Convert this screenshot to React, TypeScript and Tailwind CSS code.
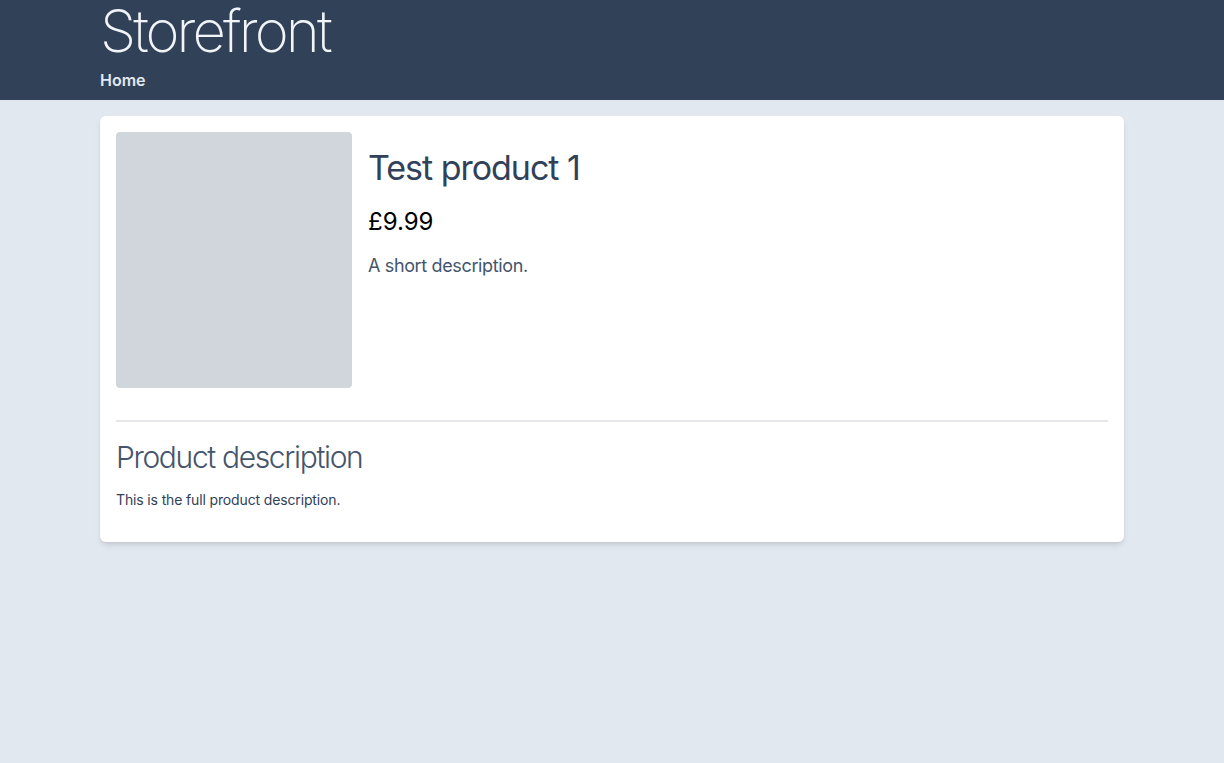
export default function App() {
  return (
    <div className="min-h-screen bg-slate-200 font-['Inter',sans-serif]">
      <header className="bg-slate-700 h-[100px]">
        <div className="max-w-5xl mx-auto">
          <h1 className="text-[58px] leading-[62px] font-extralight text-slate-100 tracking-[-0.05em]">Storefront</h1>
          <nav className="mt-[6px]">
            <a className="text-base font-semibold text-slate-200">Home</a>
          </nav>
        </div>
      </header>
      <main className="max-w-5xl mx-auto mt-4">
        <div className="bg-white rounded-md shadow-md p-4">
          <div className="flex gap-4">
            <div className="w-[236px] h-64 rounded bg-gray-300 shrink-0" />
            <div className="pt-[16px]">
              <h2 className="text-[34px] leading-10 font-normal text-slate-700 tracking-[-0.03em]">Test product 1</h2>
              <p className="mt-[18px] text-2xl text-black">£9.99</p>
              <p className="mt-[14px] text-lg text-slate-600 tracking-[-0.02em]">A short description.</p>
            </div>
          </div>
          <hr className="mt-8 border-t-2 border-gray-200" />
          <h3 className="mt-[17px] text-3xl font-light text-slate-600 tracking-[-0.045em]">Product description</h3>
          <p className="mt-[15px] text-sm text-slate-700 pb-4 tracking-[-0.01em]">This is the full product description.</p>
        </div>
      </main>
    </div>
  );
}
